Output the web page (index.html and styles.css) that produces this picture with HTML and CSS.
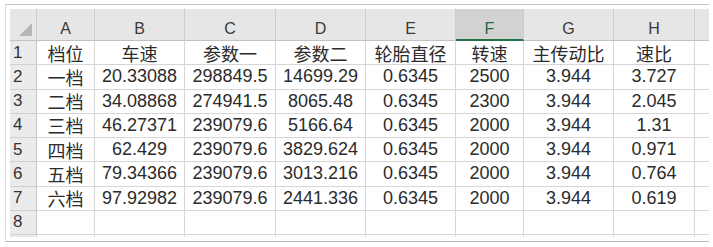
FILE: index.html
```html
<!DOCTYPE html>
<html lang="zh">
<head>
<meta charset="utf-8">
<title>档位速比</title>
<link rel="stylesheet" href="styles.css">
</head>
<body>
<div class="frame">
  <div class="sheet">
    <div class="hd corner"><span class="tri"></span></div>
    <div class="hd">A</div>
    <div class="hd">B</div>
    <div class="hd">C</div>
    <div class="hd">D</div>
    <div class="hd">E</div>
    <div class="hd sel">F</div>
    <div class="hd">G</div>
    <div class="hd">H</div>
    <div class="hd"></div>

    <div class="rn">1</div><div class="c">档位</div><div class="c">车速</div><div class="c">参数一</div><div class="c">参数二</div><div class="c">轮胎直径</div><div class="c">转速</div><div class="c">主传动比</div><div class="c">速比</div><div class="c"></div>
    <div class="rn">2</div><div class="c">一档</div><div class="c">20.33088</div><div class="c">298849.5</div><div class="c">14699.29</div><div class="c">0.6345</div><div class="c">2500</div><div class="c">3.944</div><div class="c">3.727</div><div class="c"></div>
    <div class="rn">3</div><div class="c">二档</div><div class="c">34.08868</div><div class="c">274941.5</div><div class="c">8065.48</div><div class="c">0.6345</div><div class="c">2300</div><div class="c">3.944</div><div class="c">2.045</div><div class="c"></div>
    <div class="rn">4</div><div class="c">三档</div><div class="c">46.27371</div><div class="c">239079.6</div><div class="c">5166.64</div><div class="c">0.6345</div><div class="c">2000</div><div class="c">3.944</div><div class="c">1.31</div><div class="c"></div>
    <div class="rn">5</div><div class="c">四档</div><div class="c">62.429</div><div class="c">239079.6</div><div class="c">3829.624</div><div class="c">0.6345</div><div class="c">2000</div><div class="c">3.944</div><div class="c">0.971</div><div class="c"></div>
    <div class="rn">6</div><div class="c">五档</div><div class="c">79.34366</div><div class="c">239079.6</div><div class="c">3013.216</div><div class="c">0.6345</div><div class="c">2000</div><div class="c">3.944</div><div class="c">0.764</div><div class="c"></div>
    <div class="rn">7</div><div class="c">六档</div><div class="c">97.92982</div><div class="c">239079.6</div><div class="c">2441.336</div><div class="c">0.6345</div><div class="c">2000</div><div class="c">3.944</div><div class="c">0.619</div><div class="c"></div>
    <div class="rn">8</div><div class="c"></div><div class="c"></div><div class="c"></div><div class="c"></div><div class="c"></div><div class="c"></div><div class="c"></div><div class="c"></div><div class="c"></div>
    <div class="rn"></div><div class="c"></div><div class="c"></div><div class="c"></div><div class="c"></div><div class="c"></div><div class="c"></div><div class="c"></div><div class="c"></div><div class="c"></div>
  </div>
</div>
</body>
</html>
```

FILE: styles.css
```css
html, body {
  margin: 0;
  padding: 0;
  background: #ffffff;
}

body {
  padding: 4px 3px 0 5px;
  font-family: "Liberation Sans", "Noto Sans CJK SC", sans-serif;
  color: #2b2b2b;
}

.frame {
  width: 704px;
  height: 238px;
  box-sizing: border-box;
  border-top: 1px solid #c4c4c4;
  border-bottom: 1px solid #b8b8b8;
  border-left: 1px solid #dcdcdc;
  padding: 4px 0 0 4px;
  overflow: hidden;
}

.sheet {
  display: grid;
  grid-template-columns: 27px 58px 90px 91px 90px 90px 68px 90px 81px 30px;
  grid-template-rows: 32px repeat(8, 24.25px) 10px;
  height: 228px;
  overflow: hidden;
}

.hd {
  background: #e6e6e6;
  border-right: 1px solid #cdcdcd;
  border-bottom: 1px solid #c2c2c2;
  box-sizing: border-box;
  display: flex;
  align-items: flex-end;
  justify-content: center;
  padding-bottom: 3px;
  font-size: 16px;
  color: #3a3a3a;
  line-height: 1;
}

.corner {
  position: relative;
  background: #e6e6e6;
}

.tri {
  position: absolute;
  right: 4px;
  bottom: 4px;
  width: 0;
  height: 0;
  border-left: 13px solid transparent;
  border-bottom: 13px solid #b6b6b6;
}

.sel {
  background: #d2d2d2;
  border-bottom: 2px solid #217346;
  color: #1f6a42;
  padding-bottom: 2px;
}

.rn {
  background: #ebebeb;
  border-right: 1px solid #c8c8c8;
  border-bottom: 1px solid #d0d0d0;
  box-sizing: border-box;
  display: flex;
  align-items: center;
  padding-left: 3px;
  font-size: 17px;
  color: #333333;
}

.c {
  border-right: 1px solid #d6d6d6;
  border-bottom: 1px solid #d6d6d6;
  box-sizing: border-box;
  display: flex;
  align-items: center;
  justify-content: center;
  font-size: 18px;
  white-space: nowrap;
  overflow: hidden;
}
```
